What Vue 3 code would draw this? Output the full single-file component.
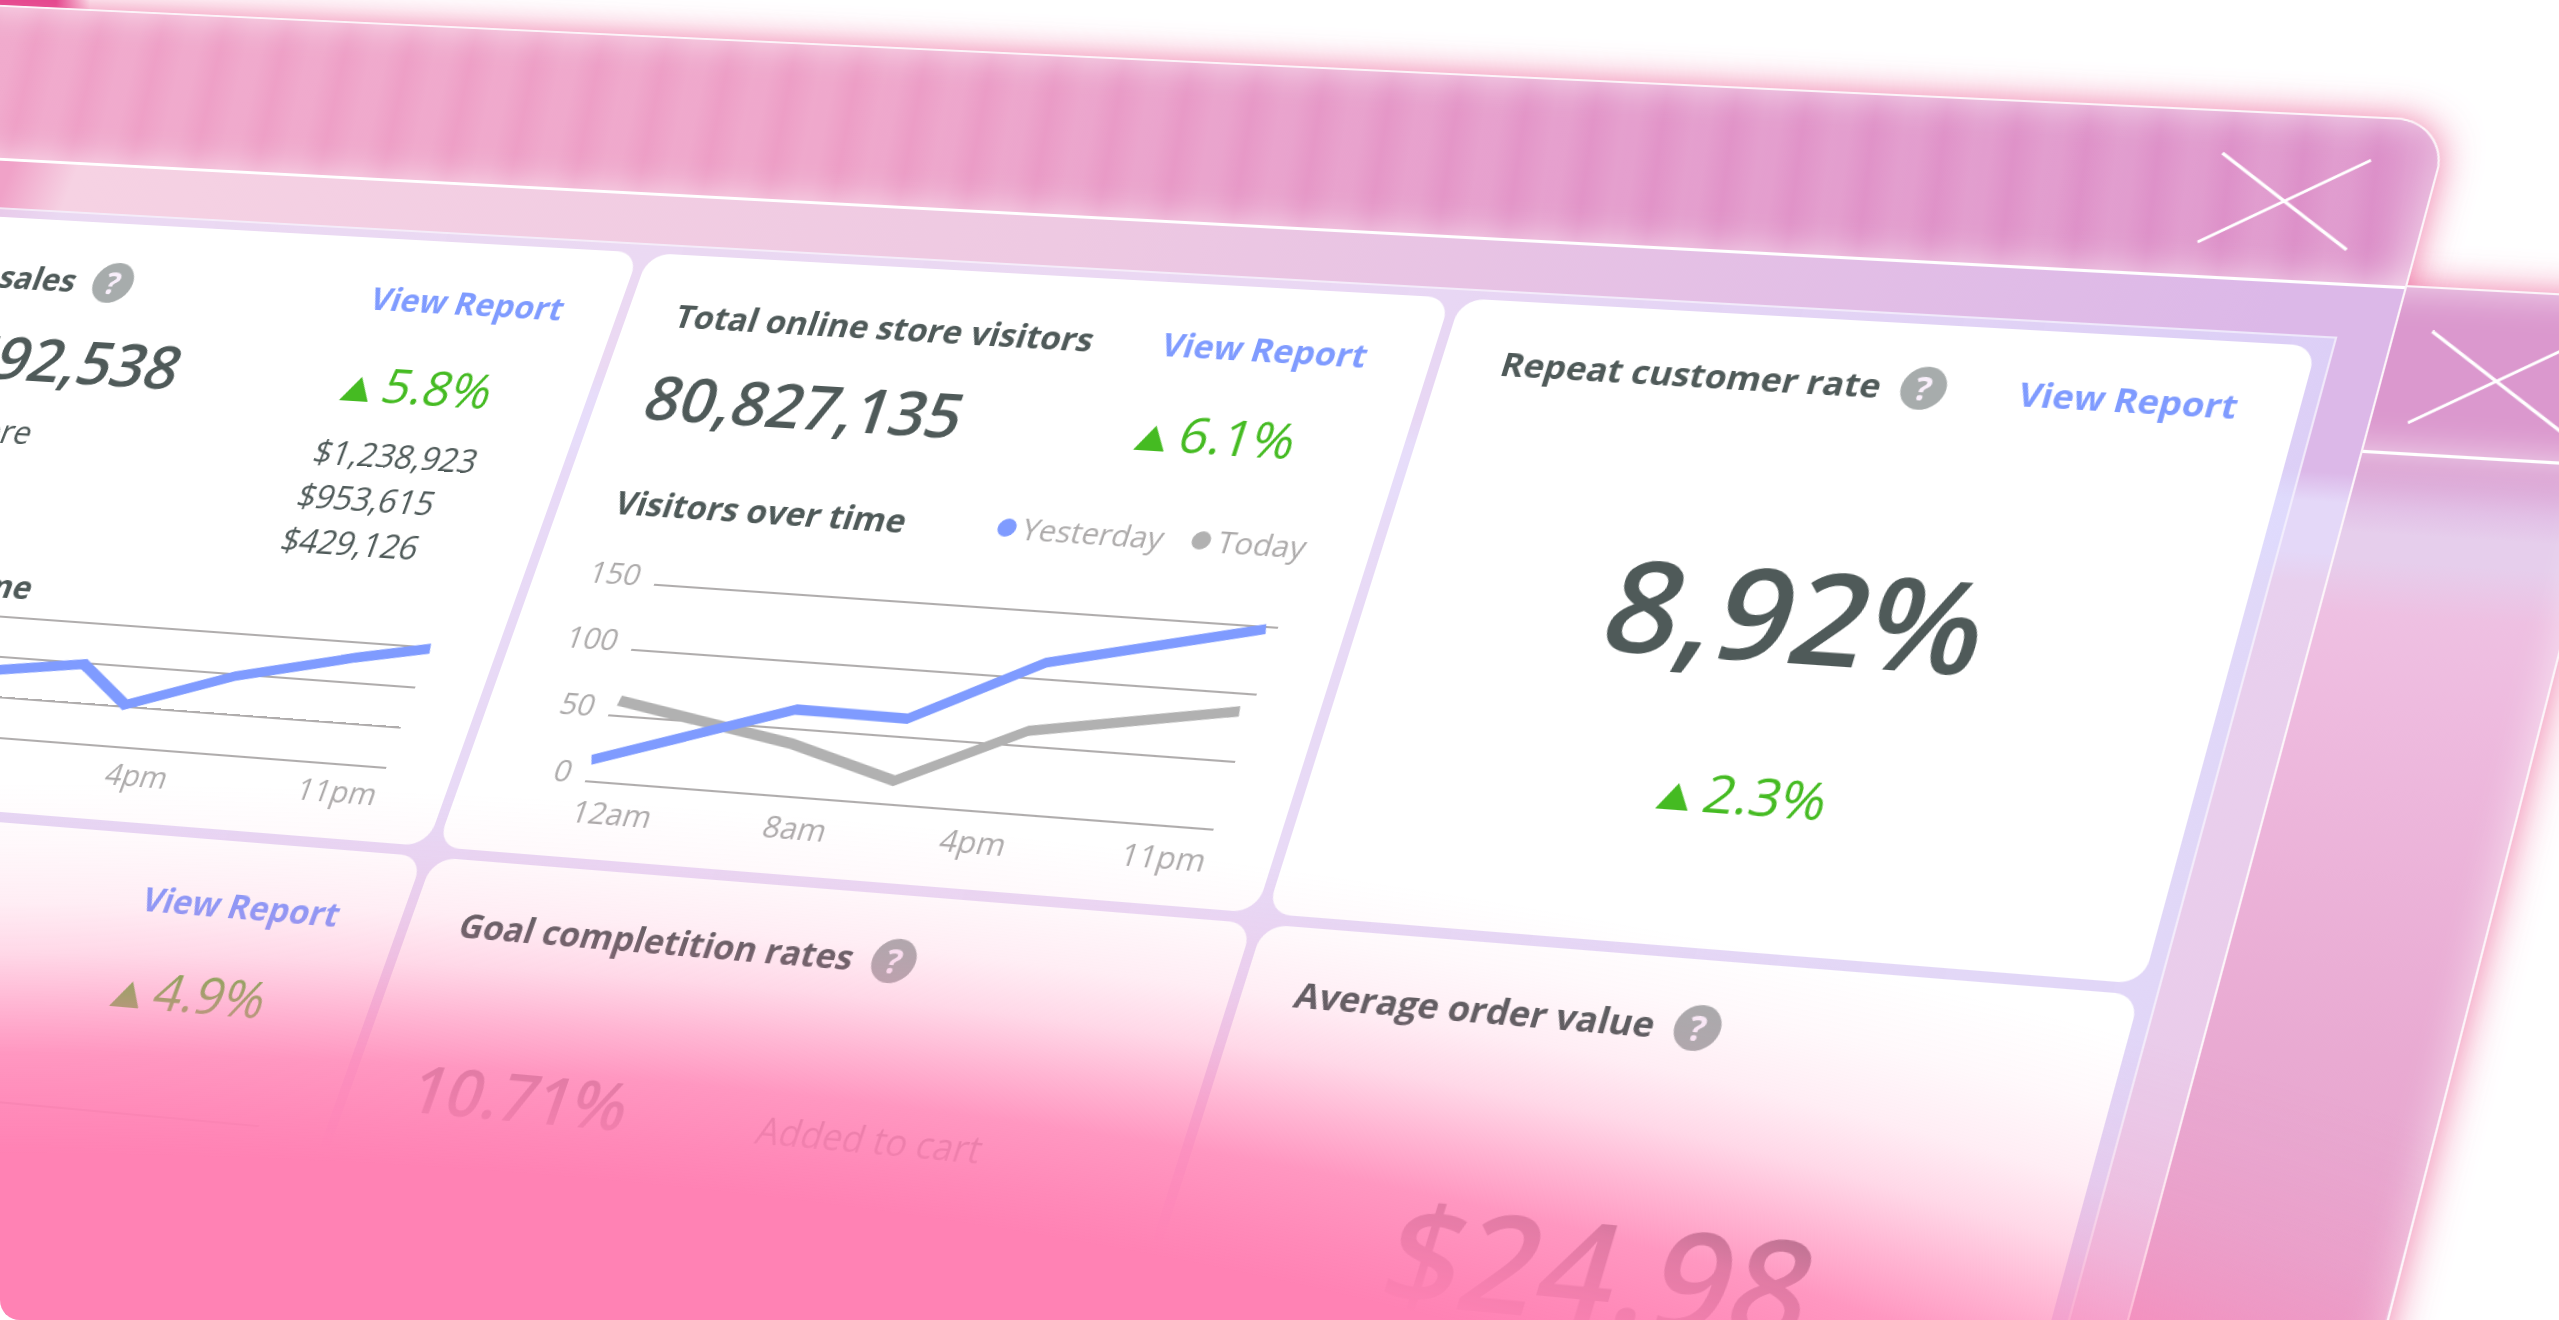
<script setup>
import { computed, onBeforeUnmount, onMounted, ref } from 'vue'

const BASE_WIDTH = 2559
const pageWidth = ref(window.innerWidth)
const measure = () => { pageWidth.value = window.innerWidth }
onMounted(() => window.addEventListener('resize', measure))
onBeforeUnmount(() => window.removeEventListener('resize', measure))

// The desk is tilted in perspective: the block that holds the second and
// third card (1610 x 600) lands on these four points of the page.
const block = { width: 1610, height: 600 }
const corners = [[649, 253], [2317, 346], [2143, 984], [437, 847]]
const origin = { x: -876, y: -225 }

const tilt = computed(() => {
  const k = pageWidth.value / BASE_WIDTH
  const [p0, p1, p2, p3] = corners.map(([x, y]) => [x * k, y * k])
  const u = [p1[0] - p2[0], p1[1] - p2[1]]
  const v = [p3[0] - p2[0], p3[1] - p2[1]]
  const s = [p0[0] - p1[0] + p2[0] - p3[0], p0[1] - p1[1] + p2[1] - p3[1]]
  const det = u[0] * v[1] - v[0] * u[1]
  const g = (s[0] * v[1] - v[0] * s[1]) / det
  const h = (u[0] * s[1] - s[0] * u[1]) / det
  const w = block.width
  const t = block.height
  const m = [
    (p1[0] - p0[0] + g * p1[0]) / w, (p1[1] - p0[1] + g * p1[1]) / w, 0, g / w,
    (p3[0] - p0[0] + h * p3[0]) / t, (p3[1] - p0[1] + h * p3[1]) / t, 0, h / t,
    0, 0, 1, 0,
    p0[0], p0[1], 0, 1
  ]
  return { transform: `matrix3d(${m.join(',')}) translate(${origin.x}px, ${origin.y}px)` }
})

const hours = ['12am', '8am', '4pm', '11pm']
const lateHours = ['4pm', '11pm']
const visitorsAxis = ['150', '100', '50', '0']
const salesSplit = ['$1,238,923', '$953,615', '$429,126']
</script>

<template>
  <main class="page">
    <div class="desk" :style="tilt">
      <div class="halo halo-back"></div>
      <div class="halo halo-front"></div>

      <section class="window window-back" aria-label="Background window">
        <header class="titlebar">
          <button class="close" type="button" aria-label="Close background window">
            <svg viewBox="0 0 138 90"><path d="M1 1L137 89M137 1L1 89" /></svg>
          </button>
        </header>
        <div class="body body-back"></div>
      </section>

      <section class="window window-front" aria-label="Dashboard">
        <header class="titlebar">
          <button class="close" type="button" aria-label="Close dashboard">
            <svg viewBox="0 0 138 90"><path d="M1 1L137 89M137 1L1 89" /></svg>
          </button>
        </header>
        <div class="body">
          <div class="panel">
            <article class="card card-sales">
              <div class="head">
                <h2>Total sales</h2>
                <button class="help" type="button" aria-label="About total sales">?</button>
                <a class="report" href="#sales">View Report</a>
              </div>
              <div class="figures">
                <strong class="number">$2,692,538</strong>
                <span class="trend"><i class="up"></i>5.8%</span>
              </div>
              <div class="split">
                <span>Online store</span>
                <ul>
                  <li v-for="sum in salesSplit" :key="sum">{{ sum }}</li>
                </ul>
              </div>
              <h3 class="sub-sales">Sales over time</h3>
              <svg class="plot plot-sales" viewBox="0 2 614 139">
                <path class="rule" d="M0 13H610M0 53H610M0 93H610M0 133H610" />
                <polyline class="line blue" points="0,104 90,72 182,66 268,54 325,91 425,55 540,28 611,14" />
              </svg>
              <div class="hours hours-late"><span v-for="h in lateHours" :key="h">{{ h }}</span></div>
            </article>

            <article class="card card-middle">
              <div class="head">
                <h2>Total online store visitors</h2>
                <a class="report" href="#visitors">View Report</a>
              </div>
              <div class="figures">
                <strong class="number">80,827,135</strong>
                <span class="trend"><i class="up"></i>6.1%</span>
              </div>
              <div class="sub-row">
                <h3>Visitors over time</h3>
                <div class="legend">
                  <span><i class="dot dot-blue"></i>Yesterday</span>
                  <span><i class="dot dot-gray"></i>Today</span>
                </div>
              </div>
              <div class="chart">
                <div class="axis"><span v-for="n in visitorsAxis" :key="n">{{ n }}</span></div>
                <svg class="plot" viewBox="0 0 614 235">
                  <path class="rule" d="M0 29H614M0 94H614M0 159H614M0 224H614" />
                  <polyline class="line gray" points="6,144 187,173 298,201 410,144 603,111" />
                  <polyline class="line blue" points="-1,203 181,140 291,141 405,78 603,31" />
                </svg>
              </div>
              <div class="hours"><span v-for="h in hours" :key="h">{{ h }}</span></div>
            </article>

            <article class="card card-indent">
              <div class="head">
                <h2>Repeat customer rate</h2>
                <button class="help" type="button" aria-label="About repeat customer rate">?</button>
                <a class="report" href="#customers">View Report</a>
              </div>
              <strong class="huge">8,92%</strong>
              <span class="trend trend-center"><i class="up"></i>2.3%</span>
            </article>

            <article class="card card-middle">
              <div class="head">
                <a class="report" href="#orders">View Report</a>
              </div>
              <div class="figures figures-end">
                <span class="trend"><i class="up"></i>4.9%</span>
              </div>
              <svg class="plot plot-orders" viewBox="0 0 614 210">
                <path class="rule" d="M0 7H610M0 72H610M0 137H610M0 202H610" />
              </svg>
            </article>

            <article class="card">
              <div class="head">
                <h2>Goal completition rates</h2>
                <button class="help" type="button" aria-label="About goal rates">?</button>
              </div>
              <div class="goal">
                <strong class="number">10.71%</strong>
                <span>Added to cart</span>
              </div>
            </article>

            <article class="card">
              <div class="head">
                <h2>Average order value</h2>
                <button class="help" type="button" aria-label="About average order value">?</button>
              </div>
              <strong class="huge">$24.98</strong>
            </article>
          </div>
        </div>
      </section>
    </div>
    <div class="fade"></div>
  </main>
</template>

<style>
body {
  margin: 0;
  background: #fff;
}
</style>

<style scoped>
.page {
  position: relative;
  height: 100vh;
  overflow: hidden;
  border-bottom-left-radius: 20px;
  background: linear-gradient(90deg, #e23d8c 56px, rgba(226, 61, 140, 0) 90px) 0 0 / 90px 40px no-repeat;
  font-family: "Open Sans", "Noto Sans", sans-serif;
  color: #4f5a59;
}

.page * {
  box-sizing: border-box;
}

.desk {
  position: relative;
  width: 2552px;
  transform-origin: 0 0;
}

.window,
.halo {
  border-radius: 52px;
}

.halo {
  position: absolute;
  box-shadow: 0 0 34px rgba(236, 100, 152, 0.85);
}

.halo-front {
  inset: 0;
}

.window-back,
.halo-back {
  position: absolute;
  top: 162px;
  left: 1200px;
  width: 1570px;
  height: 1800px;
}

.window {
  border: 2px solid rgba(255, 255, 255, 0.85);
  overflow: hidden;
  background: #eab4d8;
}

.window-front {
  position: relative;
}

.titlebar {
  display: flex;
  justify-content: flex-end;
  height: 164px;
  padding: 40px 60px 0 0;
  border-bottom: 3px solid #fff;
  background:
    repeating-linear-gradient(81deg, rgba(255, 255, 255, 0.11) 0, rgba(255, 255, 255, 0.1) 16px, rgba(255, 255, 255, 0) 38px, rgba(255, 255, 255, 0.11) 66px),
    linear-gradient(90deg, #efa1c7 0, #ed9ec6 40%, #e294c8 70%, #dc90c9 100%);
  box-shadow: inset 0 0 36px rgba(255, 255, 255, 0.65);
}

.window-back .titlebar {
  height: 160px;
  padding-right: 46px;
  background: #db98ce;
}

.close {
  width: 138px;
  height: 90px;
  padding: 0;
  border: 0;
  background: none;
}

.close svg {
  display: block;
  width: 100%;
  overflow: visible;
}

.close path {
  fill: none;
  stroke: #fff;
  stroke-width: 3;
}

.body {
  padding: 49px 48px 50px;
  background:
    linear-gradient(180deg, rgba(229, 216, 248, 0) 178px, #e4d8f8 206px, #e4d8f8 254px, #e8d0ee 282px, #ebc9e8 1000px),
    linear-gradient(90deg, #f0a2c8 180px, #f6d2e3 250px, #eec9e2 50%, #dcb8e8 96%);
}

.body-back {
  height: 100%;
  background: linear-gradient(180deg, #dba0d2 10px, #e2c0e6 50px, #e6ceec 75px, #e6ceec 100px, #eec0e2 150px, #eebbdf 230px, #e9aad2 550px, #e6a0ca 900px);
  box-shadow: inset -4px 0 32px rgba(255, 255, 255, 0.5);
}

.panel {
  display: grid;
  grid-template-columns: repeat(3, 1fr);
  grid-auto-rows: 600px;
  gap: 10px;
  padding: 8px 14px;
  border: 2px solid rgba(255, 255, 255, 0.5);
  background: linear-gradient(90deg, rgba(228, 220, 250, 0.68) 0, rgba(234, 224, 250, 0.7) 60%, rgba(220, 220, 254, 0.65) 100%);
}

.card {
  display: flex;
  flex-direction: column;
  padding: 42px 56px 0 50px;
  border-radius: 22px;
  background: #fff;
}

.card-sales {
  padding-left: 56px;
}

.card-middle {
  padding-right: 62px;
}

.card-indent {
  padding-left: 58px;
}

.head {
  display: flex;
  align-items: center;
  height: 40px;
}

h2,
h3 {
  margin: 0;
  font-size: 33px;
  font-weight: 700;
  line-height: 40px;
  white-space: nowrap;
}

.help {
  width: 42px;
  height: 42px;
  margin-left: 18px;
  padding: 0;
  border: 0;
  border-radius: 50%;
  background: #a7acac;
  color: #f9effb;
  font: 700 32px/42px "Open Sans", "Noto Sans", sans-serif;
}

.report {
  margin-left: auto;
  color: #7f9bff;
  font-size: 33px;
  font-weight: 700;
  line-height: 40px;
  text-decoration: none;
}

.figures {
  display: flex;
  justify-content: space-between;
  align-items: baseline;
  height: 72px;
  margin-top: 26px;
  padding-right: 42px;
}

.figures-end {
  justify-content: flex-end;
  padding-top: 10px;
}

.number {
  font-size: 62px;
  font-weight: 600;
  line-height: 72px;
}

.trend {
  color: #45bb22;
  font-size: 50px;
  line-height: 60px;
}

.up {
  display: inline-block;
  width: 30px;
  height: 25px;
  margin-right: 11px;
  background: #45bb22;
  clip-path: polygon(50% 0, 100% 100%, 0 100%);
}

.split {
  display: flex;
  margin-top: 18px;
  font-size: 33px;
  font-weight: 500;
  line-height: 45px;
}

.split span {
  width: 488px;
}

ul {
  margin: 0;
  padding: 0;
  list-style: none;
}

.sub-sales {
  margin-top: 24px;
}

.plot {
  width: 614px;
  margin-left: auto;
  overflow: visible;
}

.rule {
  fill: none;
  stroke: #b0adad;
  stroke-width: 2;
}

.line {
  fill: none;
  stroke-width: 10;
}

.blue {
  stroke: #7f9bff;
}

.gray {
  stroke: #b1b1b1;
}

.plot-sales {
  height: 139px;
  margin-right: 8px;
}

.plot-orders {
  height: 210px;
  margin-top: 80px;
}

.sub-row {
  display: flex;
  justify-content: space-between;
  margin-top: 52px;
  padding-left: 6px;
}

.legend {
  display: flex;
  gap: 28px;
  color: #adabab;
  font-size: 30px;
  font-weight: 500;
  line-height: 36px;
}

.legend span {
  display: flex;
  align-items: center;
}

.dot {
  width: 18px;
  height: 18px;
  margin-right: 7px;
  border-radius: 50%;
}

.dot-blue {
  background: #7f9bff;
}

.dot-gray {
  background: #b1b1b1;
}

.chart {
  display: flex;
  margin-top: 30px;
  padding-right: 2px;
}

.axis {
  display: flex;
  flex-direction: column;
  gap: 25px;
  width: 56px;
  color: #adabab;
  font-size: 30px;
  font-weight: 500;
  line-height: 40px;
  text-align: right;
}

.chart .plot {
  height: 235px;
}

.hours {
  display: flex;
  justify-content: space-between;
  width: 618px;
  margin-left: 70px;
  color: #adabab;
  font-size: 30px;
  font-weight: 500;
  line-height: 36px;
}

.hours-late {
  justify-content: flex-end;
  gap: 134px;
  width: 676px;
  margin-left: 0;
}

.huge {
  margin-top: 132px;
  font-size: 122px;
  font-weight: 600;
  line-height: 140px;
  text-align: center;
}

.trend-center {
  margin-top: 72px;
  text-align: center;
}

.goal {
  display: flex;
  align-items: baseline;
  margin-top: 99px;
  padding-left: 10px;
}

.goal span {
  margin-left: 130px;
  color: #5d6867;
  font-size: 34px;
  font-weight: 500;
}

.fade {
  position: absolute;
  inset: 0;
  pointer-events: none;
  clip-path: polygon(0 0, 107% 0, 93.2% 100%, 0 100%);
  background: radial-gradient(112% 76% at 0 152%,
    #ff82b4 85%,
    rgba(255, 130, 180, 0.94) 89%,
    rgba(255, 130, 180, 0.83) 95%,
    rgba(255, 130, 180, 0.58) 100%,
    rgba(255, 130, 180, 0.31) 105%,
    rgba(255, 130, 180, 0.14) 110%,
    rgba(255, 130, 180, 0.05) 116%,
    rgba(255, 130, 180, 0) 122%);
}
</style>
